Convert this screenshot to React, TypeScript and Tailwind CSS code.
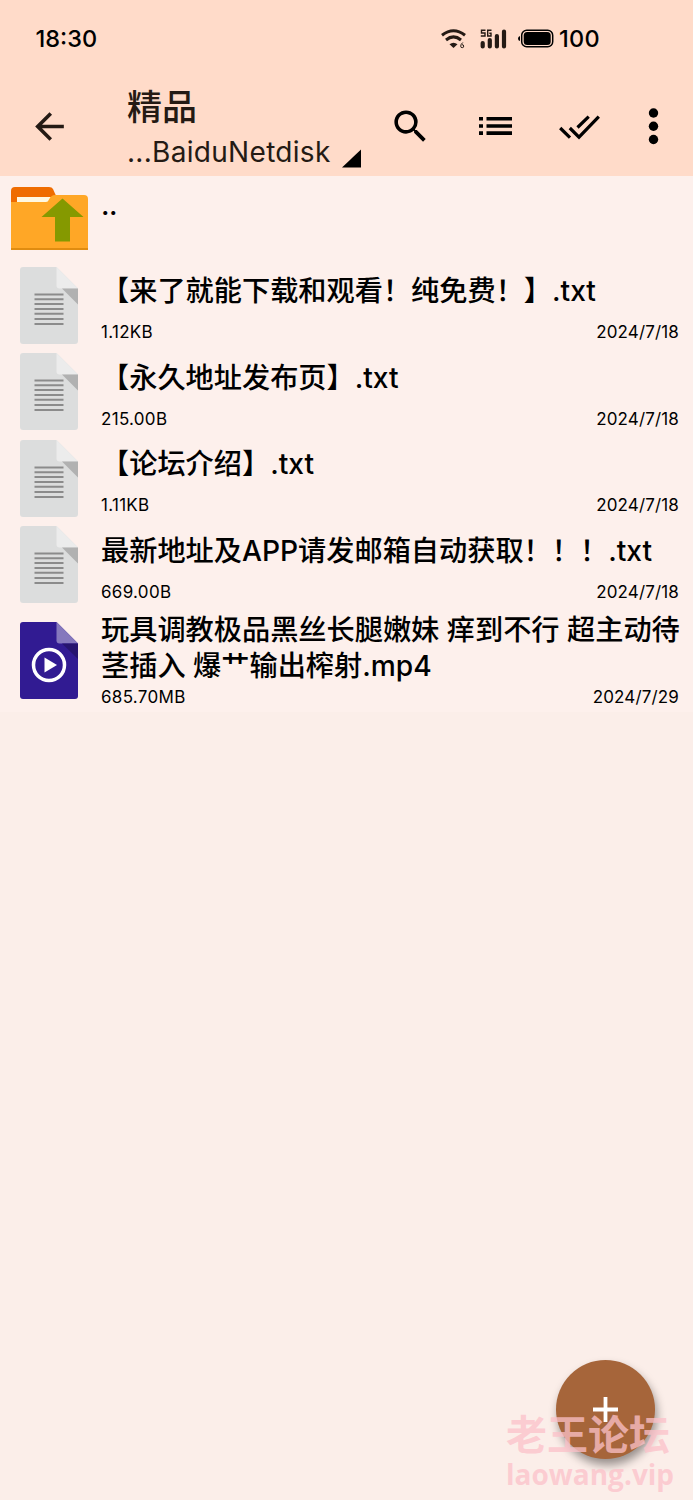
import { MdArrowBack, MdSearch } from "react-icons/md";

type FileItem = {
  name: string;
  size: string;
  date: string;
  kind: "text" | "video";
};

const files: FileItem[] = [
  { name: "【来了就能下载和观看！纯免费！】.txt", size: "1.12KB", date: "2024/7/18", kind: "text" },
  { name: "【永久地址发布页】.txt", size: "215.00B", date: "2024/7/18", kind: "text" },
  { name: "【论坛介绍】.txt", size: "1.11KB", date: "2024/7/18", kind: "text" },
  { name: "最新地址及APP请发邮箱自动获取！！！.txt", size: "669.00B", date: "2024/7/18", kind: "text" },
  { name: "玩具调教极品黑丝长腿嫩妹 痒到不行 超主动待茎插入 爆艹输出榨射.mp4", size: "685.70MB", date: "2024/7/29", kind: "video" },
];

function StatusBar() {
  return (
    <div className="flex h-[78px] items-center pl-[35.500px] text-[23.500px] font-medium text-black">
      <span className="w-[405.500px] leading-7">18:30</span>
      <svg width="25" height="20" viewBox="0 0 25 20" fill="none" stroke="#241a14" strokeWidth="3">
        <path d="M1 6.2Q12.500-2.800 24 6.200M5 11Q12.500 4.800 20 11" />
        <path d="M8.500 15.200Q12.500 12.200 16.500 15.200L12.500 19Z" fill="#241a14" stroke="none" />
        <path d="M21.800 13.500Q19.700 15.200 19.700 17.200A1.500 1.500 0 1 0 21 15.700" strokeWidth="1" />
      </svg>
      <svg className="ml-[14px]" width="27" height="20" viewBox="0 0 27 20" fill="none" stroke="#241a14">
        <path d="M5.500 1.200H1.500V4H5V7H.8M11.500 1.200H7.700V7H11V4.200H9.300" strokeWidth="1.400" />
        <path d="M2.700 14V17.500M9.800 11V17.500M16.900 7V17.500M24 2.500V17.500" strokeWidth="4.200" strokeLinecap="round" />
      </svg>
      <svg className="mb-[2px] ml-[11px]" width="36" height="19" viewBox="0 0 36 19">
        <path d="M2 7Q0 7.500 0 9.500T2 12Z" />
        <rect x="3.700" y="1.200" width="31" height="16.600" rx="5" fill="none" stroke="#000" strokeWidth="1.500" />
        <rect x="5.700" y="3" width="27" height="13" rx="3.500" />
      </svg>
      <span className="ml-[5px] leading-7 tracking-[0.300px]">100</span>
    </div>
  );
}

function AppBar() {
  return (
    <div className="flex h-[98px] items-start text-[#241a14]">
      <MdArrowBack className="mt-[27px] ml-[28px] size-[43px]" />
      <div className="ml-[56px] w-[234px]">
        <h1 className="mt-[6px] h-[47px] text-[35px] leading-[46px] font-medium">精品</h1>
        <div className="flex items-end justify-between">
          <span className="text-[28px] leading-[42px] tracking-[0.300px]">...BaiduNetdisk</span>
          <svg className="mb-[5px]" width="19" height="19" viewBox="0 0 20 19">
            <path d="M20 0V19H0Z" fill="#000" />
          </svg>
        </div>
      </div>
      <MdSearch className="mt-[27px] ml-[28px] size-[43px] text-black" />
      <svg className="mt-[38px] ml-[47px]" width="33" height="20" viewBox="0 0 33 20">
        <path d="M0 1H4V4.500H0ZM7.500 1H33V4.500H7.500ZM0 8.200H4V11.800H0ZM7.500 8.200H33V11.800H7.500ZM0 15.300H4V19H0ZM7.500 15.300H33V19H7.500Z" />
      </svg>
      <svg className="mt-[37px] ml-[47px]" width="41" height="25" viewBox="0 0 41 25" fill="none" stroke="#000" strokeWidth="3.200">
        <path d="M1.200 13L11 22.700M10.800 13L20 22.200L39.800 1.700M18.500 12.500L29.700 1.700" />
      </svg>
      <svg className="mt-[30px] ml-[48px]" width="11" height="37" viewBox="0 0 11 37">
        <circle cx="5.500" cy="5" r="4.700" />
        <circle cx="5.500" cy="18.300" r="4.700" />
        <circle cx="5.500" cy="31.500" r="4.700" />
      </svg>
    </div>
  );
}

function FolderUpIcon() {
  return (
    <svg width="77" height="63" viewBox="0 0 77 63">
      <path d="M0 4Q0 0 4 0H38Q41 0 42 2L46 11V20H0Z" fill="#ef6c00" />
      <path d="M6 10H40V18H6Z" fill="#fff8e1" />
      <path d="M0 15H35Q37 15 38 12.500Q40 8 44 8H73Q77 8 77 12V63H0Z" fill="#ffa726" />
      <path d="M0 61H77V63H0Z" fill="#e08c10" />
      <path d="M51.500 11.500L72.500 30H59V54.500H44V30H30.500Z" fill="#859900" />
    </svg>
  );
}

function FileIcon({ kind }: { kind: FileItem["kind"] }) {
  if (kind === "video") {
    return (
      <svg width="58" height="77" viewBox="0 0 58 77">
        <path d="M3 0H36.500L58 21.500V74Q58 77 55 77H3Q0 77 0 74V3Q0 0 3 0Z" fill="#311b92" />
        <path d="M36.500 0L58 21.500H39.500Q36.500 21.500 36.500 18.500Z" fill="#8578bd" />
        <path d="M42 21.500H58V37Z" fill="#26146f" />
        <circle cx="29" cy="43" r="15.500" fill="none" stroke="#fff" strokeWidth="3.500" />
        <path d="M24.500 35.500L37 43L24.500 50.500Z" fill="#fff" />
      </svg>
    );
  }
  return (
    <svg width="58" height="77" viewBox="0 0 58 77">
      <path d="M3 0H36.500L58 21.500V74Q58 77 55 77H3Q0 77 0 74V3Q0 0 3 0Z" fill="#dcdddd" />
      <path d="M36.500 0L58 21.500H39.500Q36.500 21.500 36.500 18.500Z" fill="#ececec" />
      <path d="M42 21.500H58V37.500Z" fill="#b1b1b1" />
      <path d="M14.500 27.500H43.500M14.500 32.300H43.500M14.500 37.100H43.500M14.500 41.900H43.500M14.500 46.800H43.500M14.500 51.900H43.500M14.500 57H43.500" stroke="#8b8b8b" strokeWidth="2" />
    </svg>
  );
}

function FileRow({ file }: { file: FileItem }) {
  const isLong = file.kind === "video";
  return (
    <div className={isLong ? "flex h-[104px] items-center" : "flex h-[86.500px] items-center"}>
      <div className="flex w-[101px] shrink-0 pl-[20.400px]">
        <FileIcon kind={file.kind} />
      </div>
      <div className="w-[592px]">
        <div
          className={
            isLong
              ? "pt-[3px] text-[28.200px] leading-[35.500px] font-medium break-all [text-spacing-trim:space-all]"
              : "pt-[4px] pb-[5px] text-[28.200px] leading-[45px] font-medium whitespace-nowrap [text-spacing-trim:space-all]"
          }
        >
          {file.name}
        </div>
        <div className="flex justify-between pr-[14px] text-[17px] leading-[26px] tracking-[0.150px]">
          <span className="tracking-[0.300px]">{file.size}</span>
          <span>{file.date}</span>
        </div>
      </div>
    </div>
  );
}

export default function App() {
  return (
    <div className="relative h-[1500px] w-[693px] overflow-hidden bg-[#fbeee9] font-['Inter','Noto_Sans_CJK_SC',sans-serif] text-black">
      <header className="h-[176px] bg-[#ffdbc9]">
        <StatusBar />
        <AppBar />
      </header>

      <main className="bg-[#fdf0ec]">
        <div className="flex h-[86px] items-start pt-[11px] pl-[11px]">
          <FolderUpIcon />
          <span className="ml-[13px] text-[28px] leading-[36px] font-medium tracking-[-0.500px]">..</span>
        </div>
        {files.map((file) => (
          <FileRow key={file.name} file={file} />
        ))}
      </main>

      <button className="absolute top-[1359.500px] left-[556px] flex size-[99px] items-center justify-center rounded-full bg-[#a6653a] shadow-[2px_6px_10px_rgba(0,0,0,0.400)]">
        <svg width="25" height="25" viewBox="0 0 25 25">
          <path d="M12.500 0V25M0 12.500H25" stroke="#fff" strokeWidth="3.800" />
        </svg>
      </button>

      <div className="absolute top-[1409px] left-[506px] font-['Open_Sans','Noto_Sans_CJK_SC',sans-serif] font-bold whitespace-nowrap text-[#fcc1c9]/75">
        <div className="text-[41px] leading-[50px]">老王论坛</div>
        <div className="text-[28px] leading-[31px]">laowang.vip</div>
      </div>
    </div>
  );
}
